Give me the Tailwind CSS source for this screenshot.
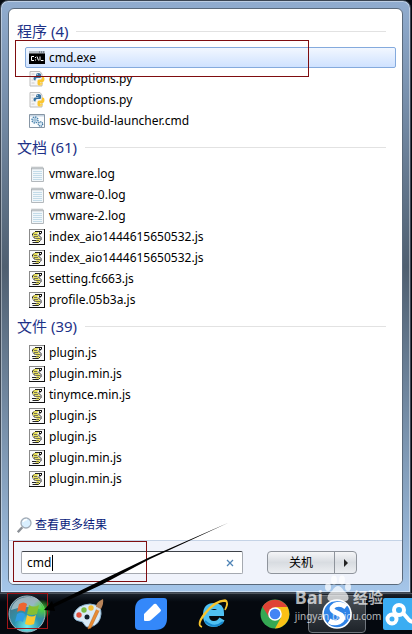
<!DOCTYPE html>
<html lang="zh-CN">
<head>
    <meta charset="UTF-8">
    <meta name="viewport" content="width=device-width, initial-scale=1.0">
    <title>开始菜单</title>
    <script src="https://cdn.jsdelivr.net/npm/@tailwindcss/browser@4"></script>
</head>
<body class="bg-[#060b12] font-['Noto_Sans','Noto_Sans_CJK_SC',sans-serif] text-xs text-black">
    <!-- shared file icons -->
    <svg class="hidden">
        <symbol id="icon-js" viewBox="0 0 16 16">
            <path d="M0 0h16v16H0z" fill="#111"/>
            <path d="M0 0h15v15H0z" fill="#8b8b8b"/>
            <path d="M1 1h14v14H1z" fill="#fafafa"/>
            <path d="M5 3h5L8 5l3 4v2l-1 2H6l2-2-4-4-.500-2z" fill="#e8e05a"/>
            <path d="M6 2.500h6M5 3.500L3.500 5v1.500M4 7.500l2.500 2.500M9 5.500l3 3v2.500M3 11.500h4M3.500 13.500h6l2-2" fill="none" stroke="#222"/>
            <path d="M5 5.500h3M5 7.500h4M7 9.500h4M7 11.500h3" stroke="#555" stroke-width=".8"/>
            <path d="M11 2h2v2l-1.500 1.500H10V4z" fill="#111"/>
            <path d="M11 3.500h1" stroke="#fff"/>
        </symbol>
        <symbol id="icon-py" viewBox="0 0 16 16">
            <path d="M1 .5h10l2 2.500v12H1z" fill="#f6f6f6" stroke="#bdbdbd"/>
            <path d="M2.500 3h3M2.500 6h2M2.500 9h2M2.500 12h3" stroke="#ccc"/>
            <path d="M7 3.500Q7 2 9.500 2t2.500 1.500V6q0 1-1 1H8Q6.500 7 6.500 9v.5H6Q4.500 9.500 4.500 7.500T6 5.500h3.500V5H7z" fill="#36709f"/>
            <path d="M13 5.500h1q1.500 0 1.500 2.500T14 11h-3v.5h2.500V13q0 1.500-2.500 1.500T8.500 13v-3q0-1.500 1.500-1.500h2q1 0 1-1.500z" fill="#fbc62f"/>
            <circle cx="8.200" cy="3.500" r=".6" fill="#fff"/>
            <circle cx="12" cy="13" r=".6" fill="#fff"/>
        </symbol>
        <symbol id="icon-log" viewBox="0 0 16 16">
            <path d="M2.500 2h12v13.500h-12z" fill="#f2f7fa" stroke="#b3b8bc"/>
            <path d="M4 5.500h9M4 7.500h9M4 9.500h9M4 11.500h9M4 13.500h9" stroke="#c3dbe8"/>
            <path d="M3 .5v3M5 .5v3M7 .5v3M9 .5v3M11 .5v3M13 .5v3" stroke="#9fa4a8" stroke-width=".8"/>
        </symbol>
        <symbol id="icon-cmd" viewBox="0 0 16 16">
            <path d="M.5 1.500h15v13H.5z" fill="#fafcfe" stroke="#8796a5"/>
            <path d="M1 2h14v1.500H1z" fill="#c5d4e2"/>
            <circle cx="6" cy="7" r="3" fill="#dcecf7" stroke="#4b83ad" stroke-width="1.400" stroke-dasharray="1.500 .8"/>
            <circle cx="6" cy="7" r="1.200" fill="#fff" stroke="#4b83ad" stroke-width=".7"/>
            <circle cx="11.500" cy="11" r="2.200" fill="#dcecf7" stroke="#3b729c" stroke-width="1.300" stroke-dasharray="1.200 .6"/>
        </symbol>
    </svg>

    <div class="relative">
        <!-- start menu window -->
        <main class="mr-px rounded-t-lg border border-[#3c4653] bg-linear-to-b from-[#91add0] via-[#4f5f70] via-45% to-[#a5c6ea] p-[7px] shadow-[inset_0_0_0_1px_#ffffff66]">
            <div class="overflow-hidden rounded-md border border-[#5a6a7c] bg-white">
                <div class="px-2 pt-3 pb-[5px]">
                    <section>
                        <h2 class="flex h-5 items-center gap-2 pr-2 text-[15px] text-[#1e3287] after:h-px after:flex-1 after:bg-[#e2e2e2]">程序 (4)</h2>
                        <ul class="mt-1.5">
                            <li><a href="#" class="ml-2 -mr-0.5 flex h-[21px] items-center gap-1 rounded-xs border border-[#84aadd] bg-linear-to-b from-[#f2f7ff] to-[#cfe2ff] px-[3px]">
                                <svg class="size-4" viewBox="0 0 16 16">
                                    <path d="M0 2h16v12H0z" fill="#000"/>
                                    <path d="M0 1h16v2.500H0z" fill="#b5bcc4"/>
                                    <path d="M10 2h1M12 2h1M14 2h1" stroke="#456"/>
                                    <path d="M5 6.500H2.500v4H5M6.500 7v1M6.500 9.500v1M8 6.500l1.500 4M11 6.500v4M12 10.500h2.500" stroke="#fff" fill="none"/>
                                </svg>cmd.exe</a></li>
                            <li><a href="#" class="flex h-[21px] items-center gap-1 pl-3"><svg class="size-4"><use href="#icon-py"/></svg>cmdoptions.py</a></li>
                            <li><a href="#" class="flex h-[21px] items-center gap-1 pl-3"><svg class="size-4"><use href="#icon-py"/></svg>cmdoptions.py</a></li>
                            <li><a href="#" class="flex h-[21px] items-center gap-1 pl-3"><svg class="size-4"><use href="#icon-cmd"/></svg>msvc-build-launcher.cmd</a></li>
                        </ul>
                    </section>
                    <section class="mt-1.5">
                        <h2 class="flex h-5 items-center gap-2 pr-2 text-[15px] text-[#1e3287] after:h-px after:flex-1 after:bg-[#e2e2e2]">文档 (61)</h2>
                        <ul class="mt-1.5">
                            <li><a href="#" class="flex h-[21px] items-center gap-1 pl-3"><svg class="size-4"><use href="#icon-log"/></svg>vmware.log</a></li>
                            <li><a href="#" class="flex h-[21px] items-center gap-1 pl-3"><svg class="size-4"><use href="#icon-log"/></svg>vmware-0.log</a></li>
                            <li><a href="#" class="flex h-[21px] items-center gap-1 pl-3"><svg class="size-4"><use href="#icon-log"/></svg>vmware-2.log</a></li>
                            <li><a href="#" class="flex h-[21px] items-center gap-1 pl-3"><svg class="size-4"><use href="#icon-js"/></svg>index_aio1444615650532.js</a></li>
                            <li><a href="#" class="flex h-[21px] items-center gap-1 pl-3"><svg class="size-4"><use href="#icon-js"/></svg>index_aio1444615650532.js</a></li>
                            <li><a href="#" class="flex h-[21px] items-center gap-1 pl-3"><svg class="size-4"><use href="#icon-js"/></svg>setting.fc663.js</a></li>
                            <li><a href="#" class="flex h-[21px] items-center gap-1 pl-3"><svg class="size-4"><use href="#icon-js"/></svg>profile.05b3a.js</a></li>
                        </ul>
                    </section>
                    <section class="mt-1.5">
                        <h2 class="flex h-5 items-center gap-2 pr-2 text-[15px] text-[#1e3287] after:h-px after:flex-1 after:bg-[#e2e2e2]">文件 (39)</h2>
                        <ul class="mt-1.5">
                            <li><a href="#" class="flex h-[21px] items-center gap-1 pl-3"><svg class="size-4"><use href="#icon-js"/></svg>plugin.js</a></li>
                            <li><a href="#" class="flex h-[21px] items-center gap-1 pl-3"><svg class="size-4"><use href="#icon-js"/></svg>plugin.min.js</a></li>
                            <li><a href="#" class="flex h-[21px] items-center gap-1 pl-3"><svg class="size-4"><use href="#icon-js"/></svg>tinymce.min.js</a></li>
                            <li><a href="#" class="flex h-[21px] items-center gap-1 pl-3"><svg class="size-4"><use href="#icon-js"/></svg>plugin.js</a></li>
                            <li><a href="#" class="flex h-[21px] items-center gap-1 pl-3"><svg class="size-4"><use href="#icon-js"/></svg>plugin.js</a></li>
                            <li><a href="#" class="flex h-[21px] items-center gap-1 pl-3"><svg class="size-4"><use href="#icon-js"/></svg>plugin.min.js</a></li>
                            <li><a href="#" class="flex h-[21px] items-center gap-1 pl-3"><svg class="size-4"><use href="#icon-js"/></svg>plugin.min.js</a></li>
                        </ul>
                    </section>
                    <a href="#" class="mt-[26px] flex h-5 items-center gap-0.5 text-[#0a1c7c]">
                        <svg class="size-4" viewBox="0 0 16 16">
                            <path d="M.8 15.200l4.500-5" stroke="#8a8f96" stroke-width="2.400"/>
                            <circle cx="9" cy="6" r="5" fill="#d9efff" stroke="#a3adb8" stroke-width="1.300"/>
                            <path d="M6 5q1-2.500 4-2.500" stroke="#fff" stroke-width="1.500" fill="none"/>
                        </svg>查看更多结果</a>
                </div>
                <div class="flex items-center gap-6 border-t border-[#c5d3e6] bg-[#f0f3fb] py-2.5 pr-[45px] pl-3">
                    <label class="flex h-[23px] flex-1 items-center rounded-xs border border-[#a5a9b0] border-t-[#3e4248] bg-white pr-1.5 pl-[5px]">
                        <input type="text" value="cmd" aria-label="搜索" class="w-[26px] border-r border-black outline-none">
                        <button aria-label="清除" class="ml-auto flex size-3 items-center justify-center">
                            <svg class="size-2" viewBox="0 0 8 8"><path d="M1 1l6 6M7 1L1 7" stroke="#4e83b5" stroke-width="1.300"/></svg>
                        </button>
                    </label>
                    <div class="flex h-[23px] rounded-sm border border-[#8f949c] bg-linear-to-b from-[#f5f6f8] via-[#d8dce1] via-50% to-[#eceef1]">
                        <button class="w-[67px] border-r border-[#8f949c]">关机</button>
                        <button aria-label="更多选项" class="flex w-[21px] items-center justify-center">
                            <svg class="h-2 w-1" viewBox="0 0 4 8"><path d="M0 0l4 4-4 4z" fill="#222"/></svg>
                        </button>
                    </div>
                </div>
            </div>
        </main>

        <!-- taskbar -->
        <nav class="flex h-10 items-center overflow-hidden border-t border-[#4d545c] bg-linear-to-b from-[#1b222b] to-[#05090f] to-20% pl-2">
            <button aria-label="开始" class="shrink-0">
                <svg class="h-[38px] w-[42px]" viewBox="0 0 42 38">
                    <defs>
                        <radialGradient id="orb" cx=".5" cy=".85" r=".8">
                            <stop offset="0" stop-color="#6ff0ee"/><stop offset=".45" stop-color="#2c93ac"/><stop offset="1" stop-color="#4b7182"/>
                        </radialGradient>
                        <radialGradient id="glow"><stop offset="0" stop-color="#4ddb3c"/><stop offset="1" stop-color="#4ddb3c" stop-opacity="0"/></radialGradient>
                    </defs>
                    <circle cx="19" cy="19" r="18" fill="url(#orb)" stroke="#9fb9c4"/>
                    <path d="M3 15Q6 3 19 2t16 13Q19 9 3 15z" fill="#fff" opacity=".45"/>
                    <circle cx="34" cy="14" r="10" fill="url(#glow)"/>
                    <path d="M11 9q5-3 8 0l-2 8q-4-3-8 0z" fill="#ee6530"/>
                    <path d="M21 10q5 3 10 0l-2 9q-5 2-10 0z" fill="#87bf32"/>
                    <path d="M9 19q4-3 8 0l-2 8q-4-3-8 0z" fill="#2f9de4"/>
                    <path d="M19 20q5 3 9 0l-2 9q-4 2-9 0z" fill="#fcc82f"/>
                </svg>
            </button>
            <button aria-label="画图" class="ml-[22px] shrink-0">
                <svg class="size-8" viewBox="0 0 32 32">
                    <path d="M2 16Q5 7 18 6q12 1 11 10-1 11-11 13-4 1-6-3-1-3-5-3-6-1-5-7z" fill="#d8eaf7" stroke="#8bb2cf"/>
                    <circle cx="7" cy="17" r="2.700" fill="#e2503c"/><circle cx="12" cy="12" r="2.700" fill="#79bb45"/><circle cx="19" cy="10" r="2.700" fill="#f3bd35"/>
                    <circle cx="15" cy="19" r="2.500" fill="#10202d"/>
                    <path d="M16 30l9-20 3 1-9 19-3 1z" fill="#e98b32" stroke="#b56320" stroke-width=".5"/>
                    <path d="M24 9q0-5 7-8 1 4-2 10z" fill="#b9855a"/><path d="M24.500 9l4 2-1 2-4-2z" fill="#ddd"/>
                </svg>
            </button>
            <button aria-label="便签" class="ml-[31px] shrink-0">
                <svg class="size-8" viewBox="0 0 32 32">
                    <path d="M12 0h17q3 0 3 3v17q0 12-12 12H4q-4 0-4-4V12Q0 0 12 0z" fill="#3488fa"/>
                    <path d="M9 16L19 6q2-1 3 1l4 5q0 1-1 2l-9 8q-1 1-3 1h-3q-1 0-1-1z" fill="#fff"/>
                </svg>
            </button>
            <button aria-label="浏览器" class="ml-[30px] shrink-0">
                <svg class="size-8" viewBox="0 0 32 32">
                    <path d="M25 21q-3 5-8 5-8 0-8-9t8-9q7 0 7 7H10" fill="none" stroke="#4fc0f2" stroke-width="6"/>
                    <path d="M26 24q-9 8-18-1" fill="none" stroke="#1688cf" stroke-width="2"/>
                    <path d="M5 29q-6-2 2-13Q18 2 28 2q4 1 0 10 5-9-1-9Q18 4 9 15-1 27 5 29z" fill="#f8c42d" stroke="#f8c42d" stroke-width="1.500"/>
                </svg>
            </button>
            <button aria-label="Chrome" class="ml-[31px] shrink-0">
                <svg class="size-[30px]" viewBox="0 0 30 30">
                    <circle cx="15" cy="15" r="14.500" fill="#35a853"/>
                    <path d="M15 8h12.500A14.500 14.500 0 0 1 15 29.500L21 18.500z" fill="#fbc116"/>
                    <path d="M2.500 7.700A14.500 14.500 0 0 1 27.500 8H15L9 18z" fill="#df4335"/>
                    <circle cx="15" cy="15" r="6.800" fill="#fff"/><circle cx="15" cy="15" r="5.300" fill="#4285f4"/>
                </svg>
            </button>
            <button aria-label="搜狗" class="ml-[18px] flex h-[38px] w-[58px] shrink-0 items-center justify-center rounded-sm border border-[#70767d] bg-linear-to-b from-[#4b5157] to-[#1e2329]">
                <svg class="size-[30px]" viewBox="0 0 30 30">
                    <circle cx="15" cy="15" r="14" fill="#2f83e6" stroke="#fff" stroke-width="1.500"/>
                    <path d="M24 8Q19 4 13 6q-6 4 0 7l6 3q4 4-2 7-5 2-10-1" fill="none" stroke="#fff" stroke-width="5"/>
                </svg>
            </button>
            <button aria-label="网盘" class="ml-[17px] shrink-0">
                <svg class="size-8" viewBox="0 0 32 32">
                    <rect width="34" height="32" rx="2" fill="#3badf2"/>
                    <g fill="none" stroke="#fff" stroke-width="4"><circle cx="16" cy="12" r="5"/><circle cx="9" cy="21" r="4.500"/><path d="M20 15l6 7q3 3 7 1"/></g>
                </svg>
            </button>
        </nav>

        <!-- tutorial marks over the desktop -->
        <div class="pointer-events-none absolute top-10 left-[15px] h-[37px] w-[294px] border border-[#7f0d10]"></div>
        <div class="pointer-events-none absolute bottom-[51px] left-[13px] h-[41px] w-[134px] border border-[#7f0d10]"></div>
        <div class="pointer-events-none absolute bottom-1 left-[7px] h-9 w-[41px] border border-[#a01518]"></div>
        <svg class="pointer-events-none absolute bottom-3 left-11 h-[100px] w-[186px]" viewBox="0 0 186 100">
            <path d="M185 1.500L106 36 56 60 9 83 8 80 0 89l11 1-1-4 47-22 49-26z" fill="#000"/>
        </svg>

        <!-- site watermark -->
        <div class="pointer-events-none absolute right-[29px] bottom-2.5 text-white/70">
            <div class="flex h-6 items-center gap-px font-bold">
                <span class="text-lg leading-6">Bai</span>
                <svg class="mb-4 size-7" viewBox="0 0 28 28" fill="currentColor">
                    <ellipse cx="4" cy="12" rx="3" ry="4"/><ellipse cx="10" cy="5" rx="3" ry="4.500"/><ellipse cx="18" cy="5" rx="3" ry="4.500"/><ellipse cx="24" cy="12" rx="3" ry="4"/>
                    <path d="M14 11q3 0 6 5 6 4 4 9-3 3-10 1-7 2-10-1-2-5 4-9 3-5 6-5z"/>
                </svg>
                <span class="text-[15px] leading-6">经验</span>
            </div>
            <div class="text-[10px] leading-[14px]">jingyan.baidu.com</div>
        </div>
    </div>
</body>
</html>
